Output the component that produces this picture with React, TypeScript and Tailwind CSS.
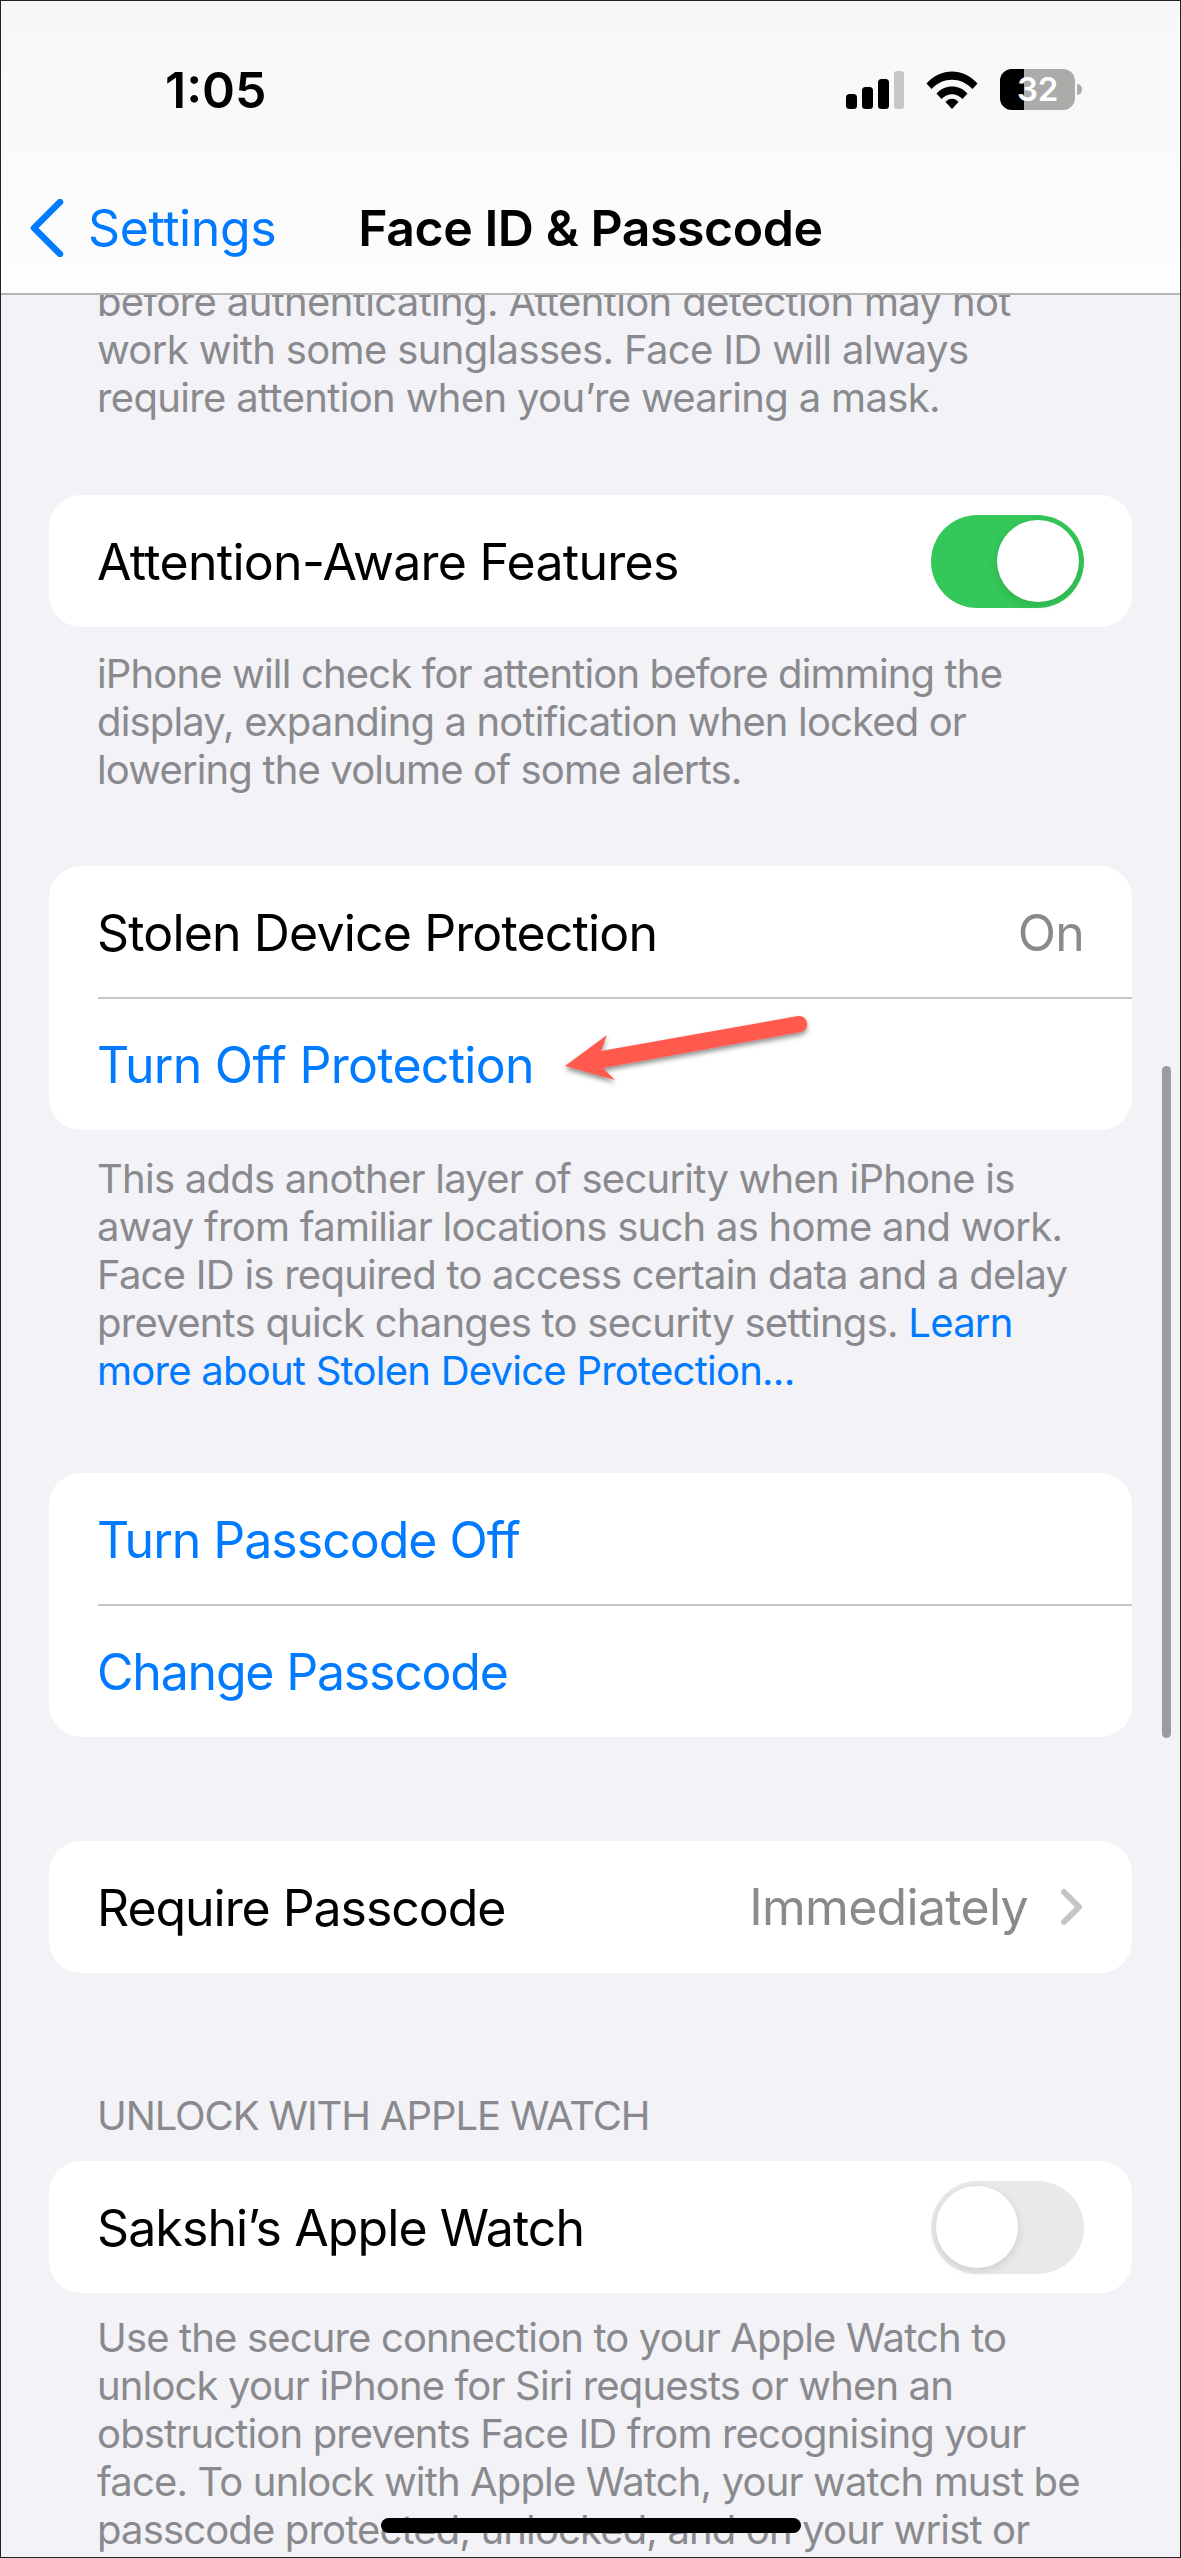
const font = "[font-family:Inter,'Liberation_Sans',sans-serif]";

function Row({ children, divider }: { children: React.ReactNode; divider?: boolean }) {
  return (
    <div className="relative flex h-[132px] items-center justify-between pl-[48px] pr-[48px]">
      {children}
      {divider && <div className="absolute -bottom-px left-[49px] right-0 h-[2px] bg-[#c6c6c8]" />}
    </div>
  );
}

function Label({ children, blue, tracking = "tracking-[-0.7px]" }: { children: React.ReactNode; blue?: boolean; tracking?: string }) {
  return (
    <span className={`pt-[2px] text-[50px] leading-[60px] whitespace-nowrap ${tracking} ${blue ? "text-[#007aff]" : "text-black"}`}>
      {children}
    </span>
  );
}

function Footer({ lines, className }: { lines: React.ReactNode[]; className: string }) {
  return (
    <div className={`px-[96px] text-[40px] leading-[48px] text-[#8a8a8e] ${className}`}>
      {lines.map((line, i) => (
        <div key={i} className="whitespace-nowrap">
          {line}
        </div>
      ))}
    </div>
  );
}

function Toggle({ on }: { on?: boolean }) {
  return (
    <div className={`flex h-[93px] w-[153px] items-center rounded-full px-[5px] ${on ? "justify-end bg-[#34c759]" : "justify-start bg-[#e9e9ea]"}`}>
      <div className="h-[82px] w-[82px] rounded-full bg-white shadow-[0_3px_10px_rgba(0,0,0,0.12)]" />
    </div>
  );
}

function StatusIcons() {
  return (
    <div className="flex items-center">
      <svg width="60" height="38" viewBox="0 0 60 38">
        <rect x="0" y="23" width="11" height="15" rx="3.5" fill="#000" />
        <rect x="16" y="16" width="11" height="22" rx="3.5" fill="#000" />
        <rect x="32" y="8" width="11" height="30" rx="3.5" fill="#000" />
        <rect x="48" y="0" width="10" height="38" rx="3" fill="#c4c8c4" />
      </svg>
      <svg className="ml-[20px]" width="52" height="38" viewBox="0 0 52 38">
        <path d="M0.5 12.5C14.5 -3.5 37.5 -3.5 51.5 12.5L46.5 18C35 5.5 17 5.5 5.5 18Z" fill="#000" />
        <path d="M10.5 22.5C18.5 13 33.5 13 41.5 22.5L36.5 28C30.5 21.5 21.5 21.5 15.5 28Z" fill="#000" />
        <path d="M19.5 31C23 26.5 29 26.5 32.5 31L26 38Z" fill="#000" />
      </svg>
      <div className="relative ml-[22px] flex h-[41px] w-[75px] items-center justify-center overflow-hidden rounded-[12px] bg-[#a9aca9]">
        <div className="absolute bottom-0 left-0 top-0 w-[24px] bg-black" />
        <span className="relative text-[33px] font-semibold leading-none tracking-[-0.2px] text-white">32</span>
      </div>
      <div className="ml-[2px] h-[11px] w-[5px] rounded-r-full bg-[#a9aca9]" />
    </div>
  );
}

export default function App() {
  return (
    <div className={`relative h-[2558px] w-[1181px] overflow-hidden border border-[#222] bg-[#f2f2f7] ${font}`}>
      {/* status + nav */}
      <div className="relative z-10 h-[294px] border-b-2 border-[#b5b5b7] bg-gradient-to-b from-[#f6f7f6] to-[#fdfdfd]">
        <div className="flex h-[197px] items-center justify-between pb-[20px] pl-[164px] pr-[98px]">
          <span className="text-[50px] font-semibold leading-none text-black">1:05</span>
          <StatusIcons />
        </div>
        <div className="flex items-center pl-[28px]">
          <svg width="36" height="58" viewBox="0 0 36 58" fill="none">
            <path d="M31 3L5 29L31 55" stroke="#007aff" strokeWidth="6.5" strokeLinecap="round" strokeLinejoin="round" />
          </svg>
          <span className="ml-[23px] text-[50px] leading-[60px] tracking-[-0.4px] text-[#007aff]">Settings</span>
          <span className="ml-[82px] text-[50px] font-semibold leading-[60px] tracking-[-0.45px] text-black">Face ID &amp; Passcode</span>
        </div>
      </div>

      {/* scrolled content */}
      <Footer
        className="-mt-[17px] tracking-[-0.65px]"
        lines={[
          "before authenticating. Attention detection may not",
          "work with some sunglasses. Face ID will always",
          "require attention when you’re wearing a mask.",
        ]}
      />

      <div className="mx-[48px] mt-[73px] rounded-[32px] bg-white">
        <Row>
          <Label>Attention-Aware Features</Label>
          <Toggle on />
        </Row>
      </div>
      <Footer
        className="mt-[23px] tracking-[-0.85px]"
        lines={[
          "iPhone will check for attention before dimming the",
          "display, expanding a notification when locked or",
          "lowering the volume of some alerts.",
        ]}
      />

      <div className="mx-[48px] mt-[72px] rounded-[32px] bg-white">
        <Row divider>
          <Label tracking="tracking-[-0.85px]">Stolen Device Protection</Label>
          <span className="pt-[2px] text-[50px] leading-[60px] tracking-[-0.7px] text-[#8a8a8e]">On</span>
        </Row>
        <Row>
          <Label blue>Turn Off Protection</Label>
        </Row>
      </div>
      <Footer
        className="mt-[25px] tracking-[-0.75px]"
        lines={[
          "This adds another layer of security when iPhone is",
          "away from familiar locations such as home and work.",
          "Face ID is required to access certain data and a delay",
          <>
            prevents quick changes to security settings. <span className="text-[#007aff]">Learn</span>
          </>,
          <span className="text-[#007aff]">more about Stolen Device Protection...</span>,
        ]}
      />

      <div className="mx-[48px] mt-[78px] rounded-[32px] bg-white">
        <Row divider>
          <Label blue tracking="tracking-[-1px]">Turn Passcode Off</Label>
        </Row>
        <Row>
          <Label blue tracking="tracking-[-1.2px]">Change Passcode</Label>
        </Row>
      </div>

      <div className="mx-[48px] mt-[104px] rounded-[32px] bg-white">
        <Row>
          <Label tracking="tracking-[-1.05px]">Require Passcode</Label>
          <div className="flex items-center">
            <span className="text-[50px] leading-[60px] tracking-[-0.7px] text-[#8a8a8e]">Immediately</span>
            <svg className="ml-[32px]" width="24" height="38" viewBox="0 0 24 38" fill="none">
              <path d="M4 4L19 19L4 34" stroke="#c4c4c7" strokeWidth="6" strokeLinecap="round" strokeLinejoin="round" />
            </svg>
          </div>
        </Row>
      </div>

      <div className="mt-[119px] px-[96px] text-[40px] leading-[48px] tracking-[-1.1px] text-[#8a8a8e]">UNLOCK WITH APPLE WATCH</div>

      <div className="mx-[48px] mt-[21px] rounded-[32px] bg-white">
        <Row>
          <Label tracking="tracking-[-0.9px]">Sakshi’s Apple Watch</Label>
          <Toggle />
        </Row>
      </div>
      <Footer
        className="mt-[21px] tracking-[-0.85px]"
        lines={[
          "Use the secure connection to your Apple Watch to",
          "unlock your iPhone for Siri requests or when an",
          "obstruction prevents Face ID from recognising your",
          "face. To unlock with Apple Watch, your watch must be",
          "passcode protected, unlocked, and on your wrist or",
        ]}
      />

      {/* overlays */}
      <svg className="absolute left-[555px] top-[1010px]" width="260" height="80" viewBox="555 1010 260 80">
        <defs>
          <filter id="arrowShadow" x="-10%" y="-30%" width="120%" height="170%">
            <feDropShadow dx="0" dy="3" stdDeviation="2.5" floodColor="#000" floodOpacity="0.45" />
          </filter>
        </defs>
        <path
          d="M564 1065L606 1034L600 1050L797 1015C807 1014 810 1028 800 1031L602 1067L614 1079Z"
          fill="#ff5a4d"
          filter="url(#arrowShadow)"
        />
      </svg>
      <div className="absolute left-[1161px] top-[1065px] h-[672px] w-[9px] rounded-full bg-[#9c9c9f]" />
      <div className="absolute bottom-[24px] left-[380px] h-[15px] w-[420px] rounded-full bg-black" />
    </div>
  );
}
